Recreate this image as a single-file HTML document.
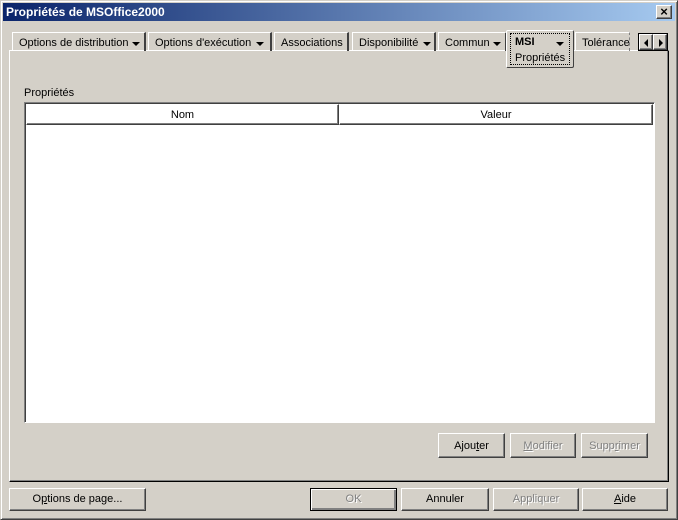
<!DOCTYPE html>
<html><head><meta charset="utf-8"><style>
*{margin:0;padding:0;box-sizing:border-box}
body{width:678px;height:520px;background:#d4d0c8;font-family:"Liberation Sans",sans-serif;font-size:11px;color:#000;position:relative;overflow:hidden}
.a{position:absolute}
.win{left:0;top:0;width:678px;height:520px;border:1px solid;border-color:#d4d0c8 #404040 #404040 #d4d0c8;box-shadow:inset 1px 1px #fff,inset -1px -1px #808080}
.title{left:3px;top:3px;width:672px;height:18px;background:linear-gradient(to right,#0a246a,#a6caf0);color:#fff;font-weight:bold;font-size:12px;line-height:18px;padding-left:3px}
.btn{position:absolute;border:1px solid;border-color:#fff #404040 #404040 #fff;box-shadow:inset -1px -1px #808080;text-align:center;line-height:21px;background:#d4d0c8}
.dis{color:#808080;text-shadow:1px 1px #fff}
.tab{position:absolute;top:32px;height:19px;border-top:1px solid #fff;border-left:1px solid #fff;border-right:2px solid #404040;line-height:20px;padding-left:6px;white-space:nowrap}
.arr{position:absolute;width:0;height:0;border-left:4px solid transparent;border-right:4px solid transparent;border-top:4px solid #000}
.panel{left:9px;top:50px;width:660px;height:432px;border:1px solid;border-color:#fff #000 #000 #fff;box-shadow:inset -1px -1px #808080}
.hdr{position:absolute;top:104px;height:21px;border:1px solid;border-color:#fff #404040 #404040 #fff;box-shadow:inset -1px -1px #808080;text-align:center;line-height:20px}
</style></head><body>
<div class="a win"></div>
<div class="a title">Propriétés de MSOffice2000</div>
<div class="btn" style="left:656px;top:5px;width:16px;height:14px;line-height:12px;font-size:13px;font-weight:bold">×</div>
<div class="a panel"></div>
<div class="tab" style="left:12px;width:134px">Options de distribution<div class="arr" style="left:119px;top:9px"></div></div>
<div class="tab" style="left:148px;width:124px">Options d'exécution<div class="arr" style="left:107px;top:9px"></div></div>
<div class="tab" style="left:274px;width:75px">Associations</div>
<div class="tab" style="left:352px;width:84px">Disponibilité<div class="arr" style="left:70px;top:9px"></div></div>
<div class="tab" style="left:438px;width:69px">Commun<div class="arr" style="left:54px;top:9px"></div></div>
<div class="a" style="left:506px;top:30px;width:68px;height:38px;border:1px solid;border-color:#fff #404040 #404040 #fff;background:#d4d0c8;border-radius:2px"><div class="a" style="left:3px;top:2px;width:60px;height:32px;border:1px dotted #000"></div><div class="a" style="left:8px;top:5px;font-weight:bold">MSI</div><div class="arr" style="left:49px;top:11px"></div><div class="a" style="left:8px;top:21px">Propriétés</div></div>
<div class="tab" style="left:575px;width:55px;border-right:1px dashed #808080">Tolérance</div>
<div class="a" style="left:638px;top:33px;width:30px;height:18px;border:1px solid #000;background:#d4d0c8"></div>
<div class="btn" style="left:639px;top:34px;width:14px;height:16px"><div class="a" style="left:4px;top:4px;border-top:4px solid transparent;border-bottom:4px solid transparent;border-right:4px solid #000"></div></div>
<div class="btn" style="left:653px;top:34px;width:14px;height:16px"><div class="a" style="left:5px;top:4px;border-top:4px solid transparent;border-bottom:4px solid transparent;border-left:4px solid #000"></div></div>
<div class="a" style="left:24px;top:87px">Propriétés</div>
<div class="a" style="left:24px;top:102px;width:631px;height:321px;background:#fff;border:1px solid;border-color:#808080 #fff #fff #808080;box-shadow:inset 1px 1px #404040"></div>
<div class="hdr" style="left:26px;width:313px">Nom</div>
<div class="hdr" style="left:339px;width:314px">Valeur</div>
<div class="btn" style="left:438px;top:433px;width:67px;height:25px;line-height:24px">Ajou<u>t</u>er</div>
<div class="btn dis" style="left:510px;top:433px;width:66px;height:25px;line-height:24px"><u>M</u>odifier</div>
<div class="btn dis" style="left:581px;top:433px;width:67px;height:25px;line-height:24px">Supp<u>r</u>imer</div>
<div class="btn" style="left:9px;top:488px;width:137px;height:23px">O<u>p</u>tions de page...</div>
<div class="btn dis" style="left:310px;top:488px;width:87px;height:23px;border-color:#000;box-shadow:inset 1px 1px #fff,inset -2px -2px #808080">OK</div>
<div class="btn" style="left:401px;top:488px;width:88px;height:23px">Annuler</div>
<div class="btn dis" style="left:493px;top:488px;width:86px;height:23px">Appliquer</div>
<div class="btn" style="left:582px;top:488px;width:86px;height:23px"><u>A</u>ide</div>
</body></html>
